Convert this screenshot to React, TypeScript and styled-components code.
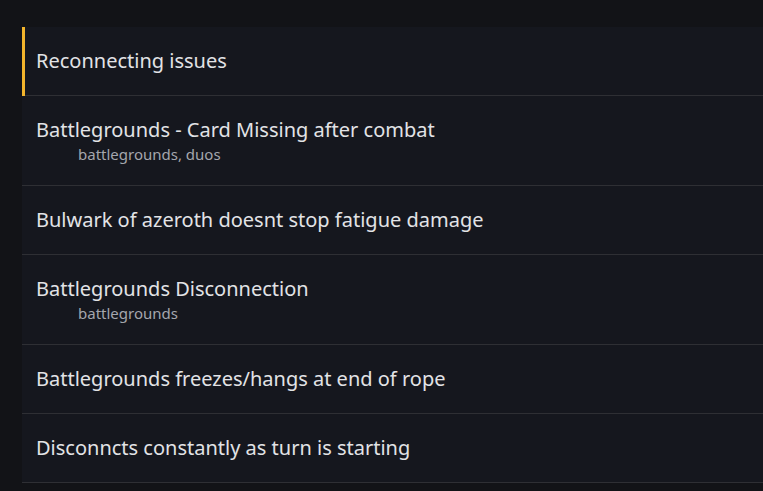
import React from 'react';
import styled, { createGlobalStyle } from 'styled-components';

const GlobalStyle = createGlobalStyle`
  html, body {
    margin: 0;
    padding: 0;
    background: #121317;
    font-family: 'Noto Sans', 'Open Sans', sans-serif;
    overflow: hidden;
  }
`;

const Page = styled.main`
  padding: 27px 0 0 22px;
  min-height: 100vh;
  box-sizing: border-box;
`;

const List = styled.ul`
  list-style: none;
  margin: 0;
  padding: 0;
  background: #15171e;
`;

const Item = styled.li<{ active?: boolean }>`
  position: relative;
  padding: 22px 14px 22px 14px;
  border-bottom: 1px solid #2e2f34;
  cursor: pointer;

  &::before {
    content: '';
    position: absolute;
    left: 0;
    top: 0;
    bottom: -1px;
    width: 3px;
    background: ${({ active }) => (active ? '#f2b42c' : 'transparent')};
  }
`;

const Title = styled.div`
  color: #e2e3e6;
  font-size: 20px;
  line-height: 24px;
`;

const Tags = styled.div`
  color: #a4a6ad;
  font-size: 15px;
  line-height: 18px;
  margin-top: 3px;
  padding-left: 42px;
`;

type Issue = { title: string; tags?: string[] };

const issues: Issue[] = [
  { title: 'Reconnecting issues' },
  { title: 'Battlegrounds - Card Missing after combat', tags: ['battlegrounds', 'duos'] },
  { title: 'Bulwark of azeroth doesnt stop fatigue damage' },
  { title: 'Battlegrounds Disconnection', tags: ['battlegrounds'] },
  { title: 'Battlegrounds freezes/hangs at end of rope' },
  { title: 'Disconncts constantly as turn is starting' },
];

function App() {
  return (
    <>
      <GlobalStyle />
      <Page>
        <List>
          {issues.map((issue, i) => (
            <Item key={issue.title} active={i === 0}>
              <Title>{issue.title}</Title>
              {issue.tags && <Tags>{issue.tags.join(', ')}</Tags>}
            </Item>
          ))}
        </List>
      </Page>
    </>
  );
}

export default App;
